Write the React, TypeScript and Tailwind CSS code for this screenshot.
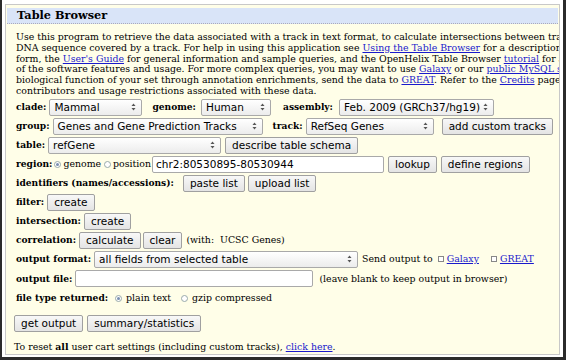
import React from "react";

const serif = "font-['DejaVu_Serif',serif]";
const sans = "font-['DejaVu_Sans',sans-serif]";

function Arrows() {
  return (
    <svg width="5" height="8" viewBox="0 0 5 8" className="shrink-0">
      <path d="M2.5 0.5 L4.5 3 L0.5 3 Z" fill="#555" />
      <path d="M2.5 7.5 L4.5 5 L0.5 5 Z" fill="#555" />
    </svg>
  );
}

function Select({ label, w }: { label: string; w: number }) {
  return (
    <div
      className={`flex h-[17px] items-center justify-between rounded-[2px] border border-[#a9a9a9] bg-gradient-to-b from-white to-[#ececec] pl-[4px] pr-[5px] text-[10.5px] leading-none text-black ${sans}`}
      style={{ width: w }}
    >
      <span className="whitespace-nowrap">{label}</span>
      <Arrows />
    </div>
  );
}

function Btn({ children }: { children: React.ReactNode }) {
  return (
    <div
      className={`flex h-[17px] items-center whitespace-nowrap rounded-[2px] border border-[#a0a0a0] bg-gradient-to-b from-[#f8f8f8] to-[#e4e4e4] px-[6px] text-[10.5px] leading-none text-black ${sans}`}
    >
      {children}
    </div>
  );
}

function Input({ value, w }: { value?: string; w: number }) {
  return (
    <div
      className={`flex h-[17px] items-center rounded-[2px] border border-[#a9a9a9] bg-white pl-[3px] text-[10.5px] leading-none ${sans}`}
      style={{ width: w }}
    >
      {value}
    </div>
  );
}

function Radio({ on }: { on?: boolean }) {
  return (
    <span className="inline-flex h-[7px] w-[7px] items-center justify-center rounded-full border border-[#9aa] bg-white">
      {on && <span className="h-[3px] w-[3px] rounded-full bg-[#7a8fb0]" />}
    </span>
  );
}

function Check() {
  return <span className="inline-block h-[6px] w-[6px] border border-[#888] bg-white" />;
}

function A({ children }: { children: React.ReactNode }) {
  return <span className="text-[#1a1acc] underline">{children}</span>;
}

function Label({ children }: { children: React.ReactNode }) {
  return <b className="whitespace-nowrap text-[9.1px] font-bold">{children}</b>;
}

function Row({ children, className = "" }: { children: React.ReactNode; className?: string }) {
  return <div className={`flex h-[19px] items-center whitespace-nowrap ${className}`}>{children}</div>;
}

export default function App() {
  return (
    <div className="h-[360px] w-[566px] overflow-hidden bg-white">
      <div className="flex h-[360px] flex-col border-b-[3px] border-l-2 border-r-[3px] border-[#2b2b2b] px-[3px] pb-[2px] pt-[4px]">
        <div className={`flex min-h-0 flex-1 flex-col overflow-hidden border border-[#c8c8c8] bg-[#fffee8] text-black ${serif}`}>
          <div className="mx-[1px] mt-[3px] flex h-[16px] shrink-0 items-center border-b border-dotted border-[#aab] bg-[#d9e4f8] pl-[10px] text-[11.3px] font-bold">
            Table Browser
          </div>
          <div className="px-[10px] pt-[8px] text-[9.4px]">
            <p className="whitespace-nowrap leading-[10.8px]">
              Use this program to retrieve the data associated with a track in text format, to calculate intersections between tracks, and to retrieve
              <br />
              DNA sequence covered by a track. For help in using this application see <A>Using the Table Browser</A> for a description of the controls in this
              <br />
              form, the <A>User's Guide</A> for general information and sample queries, and the OpenHelix Table Browser <A>tutorial</A> for a narrated presentation
              <br />
              of the software features and usage. For more complex queries, you may want to use <A>Galaxy</A> or our <A>public MySQL server</A>. To examine the
              <br />
              biological function of your set through annotation enrichments, send the data to <A>GREAT</A>. Refer to the <A>Credits</A> page for the list of
              <br />
              contributors and usage restrictions associated with these data.
            </p>

            <div className="mt-[1px] flex flex-col">
              <Row>
                <Label>clade:</Label>
                <span className="ml-[3px]"><Select label="Mammal" w={93} /></span>
                <span className="ml-[10px]"><Label>genome:</Label></span>
                <span className="ml-[5px]"><Select label="Human" w={70} /></span>
                <span className="ml-[12px]"><Label>assembly:</Label></span>
                <span className="ml-[6px]"><Select label="Feb. 2009 (GRCh37/hg19)" w={155} /></span>
              </Row>
              <Row>
                <Label>group:</Label>
                <span className="ml-[3px]"><Select label="Genes and Gene Prediction Tracks" w={210} /></span>
                <span className="ml-[10px]"><Label>track:</Label></span>
                <span className="ml-[3px]"><Select label="RefSeq Genes" w={128} /></span>
                <span className="ml-[8px]"><Btn>add custom tracks</Btn></span>
              </Row>
              <Row>
                <Label>table:</Label>
                <span className="ml-[3px]"><Select label="refGene" w={173} /></span>
                <span className="ml-[4px]"><Btn>describe table schema</Btn></span>
              </Row>
              <Row>
                <Label>region:</Label>
                <span className="ml-[2px] flex items-center gap-[2px]">
                  <Radio on /> genome
                </span>
                <span className="ml-[3px] flex items-center gap-[2px]">
                  <Radio /> position
                </span>
                <span className="ml-[1px]"><Input value="chr2:80530895-80530944" w={232} /></span>
                <span className="ml-[4px]"><Btn>lookup</Btn></span>
                <span className="ml-[4px]"><Btn>define regions</Btn></span>
              </Row>
              <Row>
                <Label>identifiers (names/accessions):</Label>
                <span className="ml-[9px]"><Btn>paste list</Btn></span>
                <span className="ml-[3px]"><Btn>upload list</Btn></span>
              </Row>
              <Row>
                <Label>filter:</Label>
                <span className="ml-[3px]"><Btn>create</Btn></span>
              </Row>
              <Row>
                <Label>intersection:</Label>
                <span className="ml-[3px]"><Btn>create</Btn></span>
              </Row>
              <Row>
                <Label>correlation:</Label>
                <span className="ml-[3px]"><Btn>calculate</Btn></span>
                <span className="ml-[2px]"><Btn>clear</Btn></span>
                <span className="ml-[4px]">(with:&nbsp; UCSC Genes)</span>
              </Row>
              <Row>
                <Label>output format:</Label>
                <span className="ml-[3px]"><Select label="all fields from selected table" w={264} /></span>
                <span className="ml-[4px]">Send output to</span>
                <span className="ml-[5px]"><Check /></span>
                <span className="ml-[3px]"><A>Galaxy</A></span>
                <span className="ml-[12px]"><Check /></span>
                <span className="ml-[3px]"><A>GREAT</A></span>
              </Row>
              <Row className="h-[20px]">
                <Label>output file:</Label>
                <span className="ml-[3px]"><Input w={238} /></span>
                <span className="ml-[6px]">(leave blank to keep output in browser)</span>
              </Row>
              <Row className="h-[17px]">
                <Label>file type returned:</Label>
                <span className="ml-[7px] flex items-center gap-[4px]">
                  <Radio on /> plain text
                </span>
                <span className="ml-[10px] flex items-center gap-[4px]">
                  <Radio /> gzip compressed
                </span>
              </Row>
              <Row className="mt-[6px] -ml-[2px]">
                <Btn>get output</Btn>
                <span className="ml-[4px]"><Btn>summary/statistics</Btn></span>
              </Row>
              <p className="-ml-[2px] mt-[8px] leading-[11px]">
                To reset <b>all</b> user cart settings (including custom tracks), <A>click here</A>.
              </p>
            </div>
          </div>
        </div>
      </div>
    </div>
  );
}
